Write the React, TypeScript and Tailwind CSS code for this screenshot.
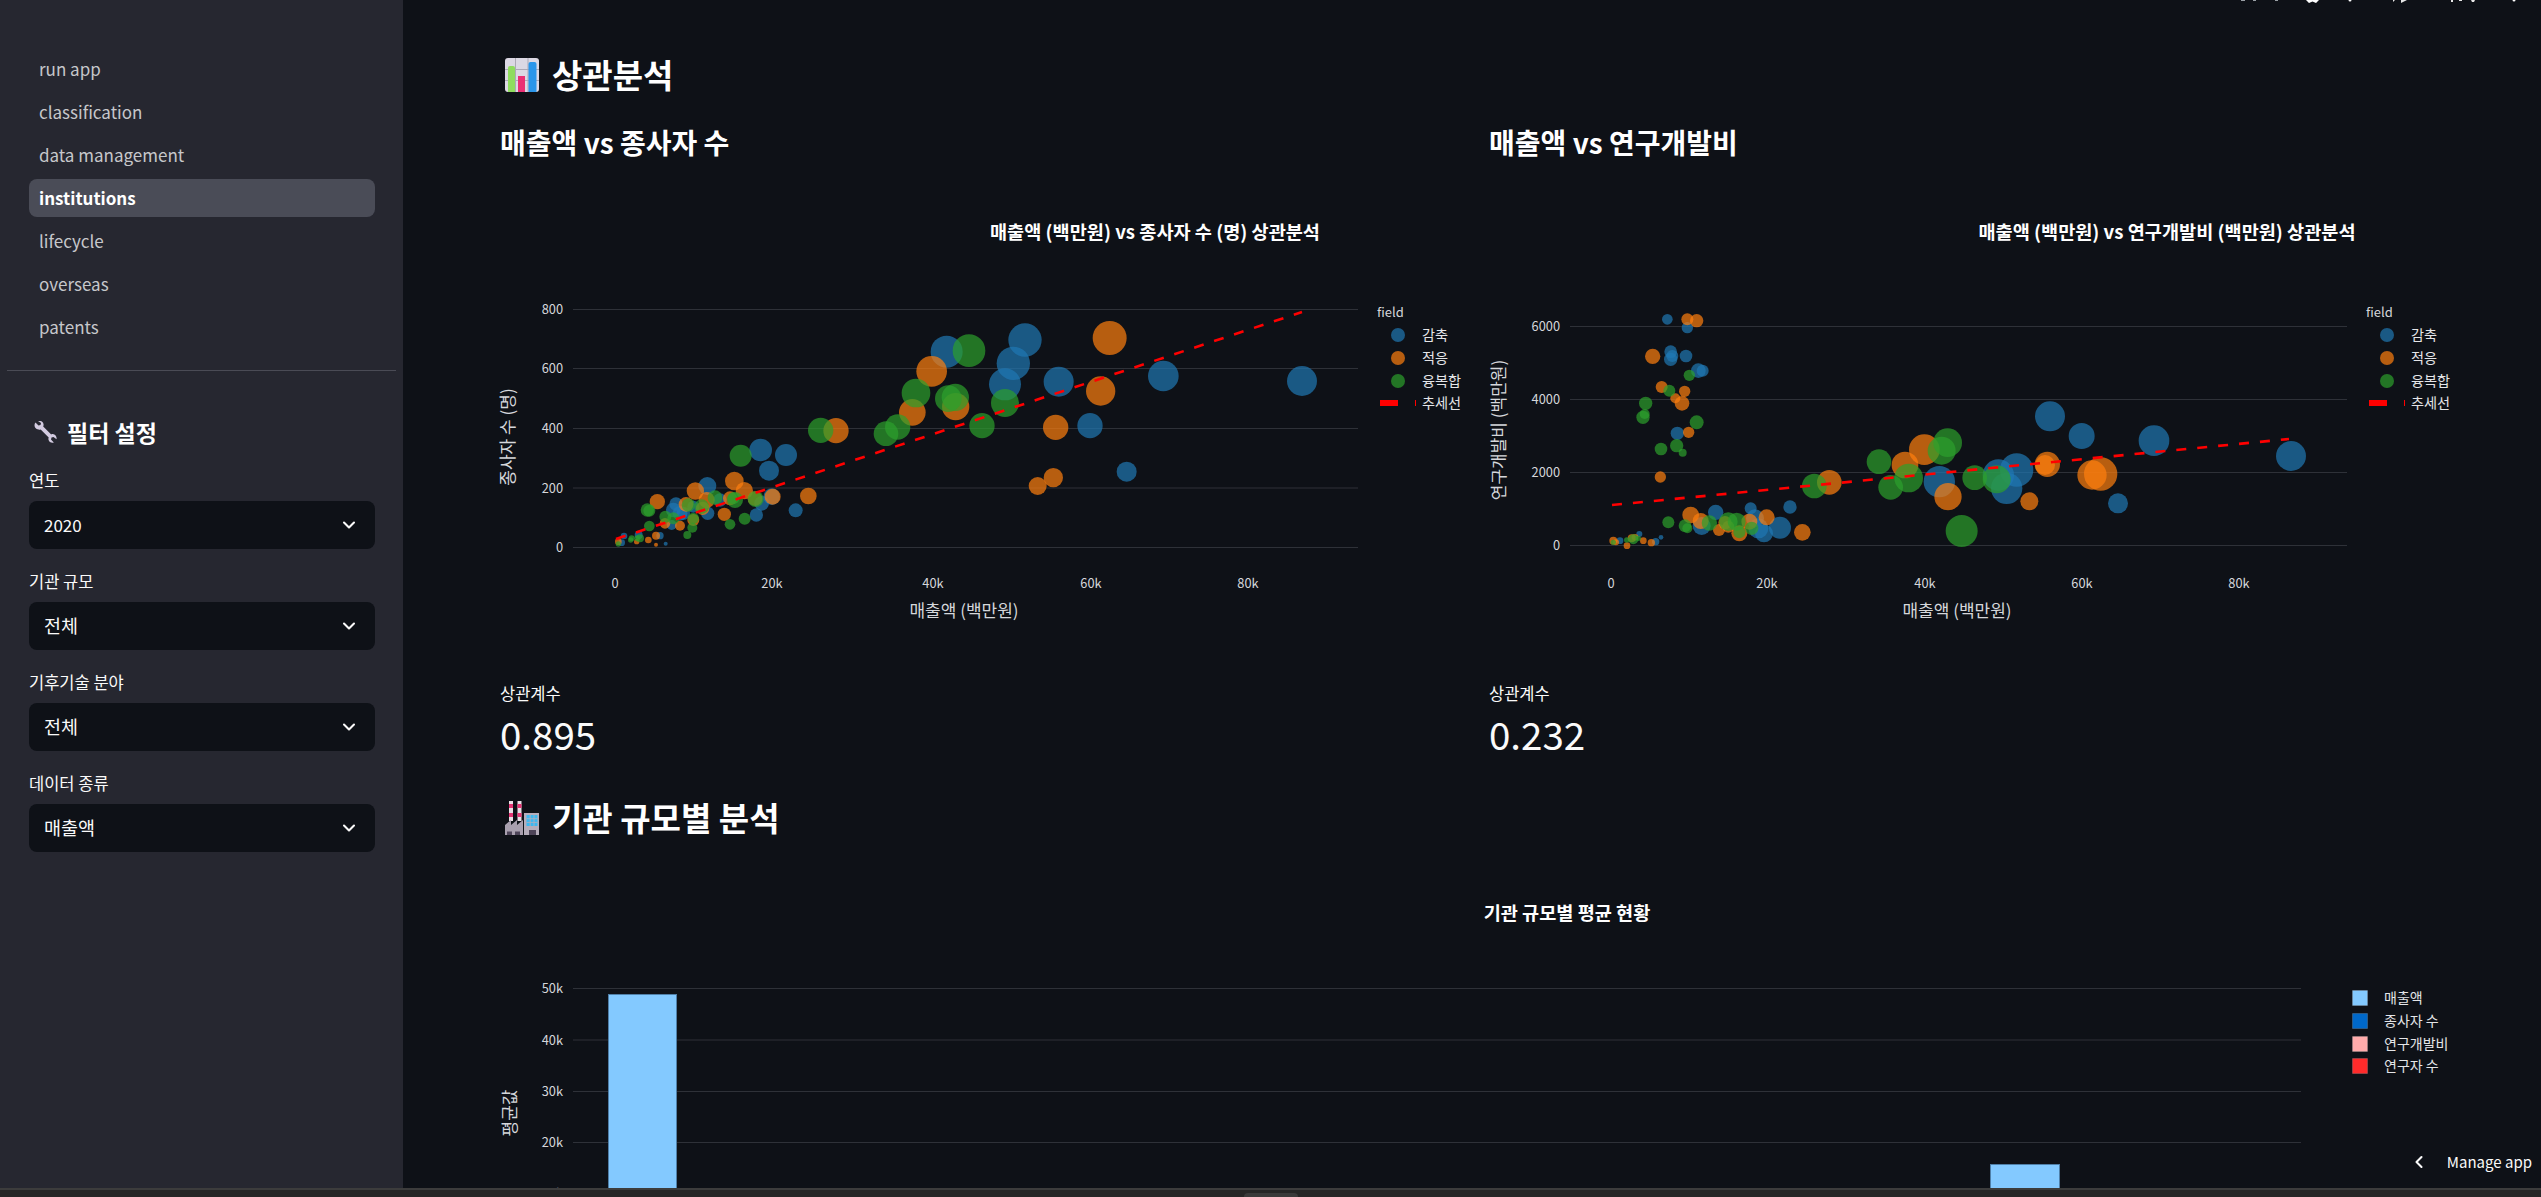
import { ChevronDown, ChevronLeft } from 'lucide-react';

type Bubble = [number, number, number];

const navItems = ['run app', 'classification', 'data management', 'institutions', 'lifecycle', 'overseas', 'patents'];

const filters = [
  { label: '연도', value: '2020' },
  { label: '기관 규모', value: '전체' },
  { label: '기후기술 분야', value: '전체' },
  { label: '데이터 종류', value: '매출액' },
];

// bubble positions were read off at 3x, so they are kept in that scale and moved to page pixels here
const at = (ox: number, oy: number, list: Bubble[]): Bubble[] =>
  list.map(([x, y, r]) => [ox + x / 3, oy + y / 3, r / 3]);

const BLUE = '#1f77b4';
const ORANGE = '#ff7f0e';
const GREEN = '#2ca02c';

const revenueStaff = {
  blue: [
    ...at(560, 280, [
      [1160, 215, 48], [602, 510, 34], [678, 525, 33], [627, 572, 30], [442, 618, 27], [348, 672, 20], [360, 700, 22],
      [340, 690, 22], [335, 735, 15], [443, 700, 20], [480, 660, 20], [589, 705, 20], [605, 670, 22], [635, 650, 25],
      [707, 691, 21], [300, 767, 11], [192, 768, 10], [236, 765, 12], [185, 788, 10], [317, 791, 6], [400, 680, 18], [370, 700, 20],
    ]),
    ...at(1000, 280, [
      [75, 180, 50], [40, 250, 50], [15, 313, 48], [176, 305, 45], [490, 288, 46], [906, 303, 45], [270, 437, 38], [380, 575, 30],
    ]),
  ],
  orange: [
    ...at(560, 280, [
      [1115, 274, 46], [1057, 397, 40], [1187, 380, 41], [828, 452, 38], [523, 603, 28], [553, 632, 26], [406, 633, 26],
      [292, 665, 23], [378, 673, 22], [440, 660, 24], [510, 655, 21], [585, 656, 22], [638, 650, 24], [745, 648, 25],
      [493, 703, 20], [428, 685, 20], [400, 720, 18], [315, 730, 16], [360, 737, 15], [288, 767, 12], [265, 780, 10],
      [230, 785, 8], [175, 785, 10], [288, 794, 6],
    ]),
    ...at(1000, 280, [[329, 174, 51], [302, 333, 44], [167, 442, 38], [160, 593, 29], [113, 618, 27]]),
  ],
  green: [
    ...at(560, 280, [
      [1068, 339, 43], [1227, 212, 49], [1165, 356, 40], [1186, 352, 41], [1013, 441, 38], [978, 461, 37], [1266, 437, 38],
      [782, 451, 38], [542, 527, 33], [465, 653, 22], [525, 660, 24], [520, 655, 18], [587, 657, 24], [268, 738, 16],
      [262, 690, 20], [268, 692, 18], [316, 710, 18], [340, 715, 18], [385, 675, 20], [425, 680, 22], [400, 715, 17],
      [397, 743, 15], [382, 765, 12], [510, 733, 16], [554, 716, 18], [212, 780, 8], [215, 775, 9], [240, 775, 12],
      [232, 775, 9], [175, 792, 8],
    ]),
    ...at(1000, 280, [[15, 369, 42]]),
  ],
};

const revenueRnd = {
  blue: [
    ...at(1480, 280, [
      [562, 118, 16], [622, 143, 17], [572, 215, 19], [572, 238, 20], [577, 228, 18], [618, 228, 19], [655, 272, 22],
      [668, 272, 18], [592, 460, 20], [665, 738, 27], [707, 697, 23], [812, 685, 18], [825, 715, 27], [835, 745, 30],
      [852, 760, 27], [900, 743, 33], [930, 681, 20], [478, 762, 9], [420, 782, 10], [527, 785, 11], [543, 772, 7], [1378, 605, 47],
    ]),
    ...at(1980, 280, [
      [210, 409, 45], [305, 468, 39], [522, 482, 46], [933, 528, 45], [110, 570, 50], [55, 585, 47], [80, 625, 47], [414, 670, 30],
    ]),
  ],
  orange: [
    ...at(1480, 280, [
      [622, 118, 18], [650, 122, 20], [518, 229, 23], [545, 321, 18], [614, 334, 17], [586, 355, 15], [606, 370, 22],
      [626, 457, 17], [541, 591, 17], [632, 705, 25], [662, 723, 24], [717, 750, 18], [735, 728, 20], [745, 740, 18],
      [778, 760, 24], [808, 725, 24], [860, 712, 24], [967, 757, 25], [1048, 607, 37], [1275, 555, 40], [1333, 509, 46],
      [1404, 650, 41], [400, 782, 12], [408, 787, 9], [441, 797, 10], [455, 775, 12], [490, 782, 10], [514, 788, 11], [465, 772, 10],
    ]),
    ...at(1980, 280, [[202, 553, 38], [195, 555, 30], [336, 585, 44], [362, 582, 50], [148, 664, 27]]),
  ],
  green: [
    ...at(1480, 280, [
      [497, 370, 20], [494, 402, 15], [489, 412, 20], [568, 332, 18], [628, 286, 17], [650, 427, 21], [590, 497, 20],
      [543, 507, 19], [608, 518, 12], [565, 727, 18], [615, 737, 19], [622, 745, 15], [688, 729, 23], [745, 725, 28],
      [770, 725, 27], [778, 757, 18], [815, 745, 20], [1003, 618, 37], [1197, 545, 37], [1232, 622, 37], [1286, 594, 43],
      [1403, 488, 43], [1385, 512, 42], [1445, 753, 48], [1484, 593, 37], [400, 787, 8], [440, 780, 8], [460, 778, 15], [475, 775, 8],
    ]),
    ...at(1980, 280, [[50, 598, 42]]),
  ],
};

const GRID = '#2e3138';
const TICK = '#d5d7db';

interface ScatterProps {
  box: string;
  title: string;
  titleX: number;
  gridLeft: number;
  gridRight: number;
  yTicks: [string, number][];
  xTicks: [string, number][];
  yTitle: string;
  yTitleX: number;
  yTitleY: number;
  xTitleX: number;
  trend: [number, number, number, number];
  legendX: number;
  data: { blue: Bubble[]; orange: Bubble[]; green: Bubble[] };
}

function Scatter(p: ScatterProps) {
  const traces: [Bubble[], string][] = [
    [p.data.blue, BLUE],
    [p.data.orange, ORANGE],
    [p.data.green, GREEN],
  ];
  const legend: [string, string, number][] = [
    ['감축', BLUE, 335],
    ['적응', ORANGE, 358],
    ['융복합', GREEN, 381],
  ];
  return (
    <svg viewBox={p.box} className="block w-full h-[450px] overflow-visible">
      <text x={p.titleX} y={239} textAnchor="middle" fontSize={18.6} fontWeight={700} fill="#ffffff">
        {p.title}
      </text>
      {p.yTicks.map(([label, y]) => (
        <g key={label}>
          <line x1={p.gridLeft} x2={p.gridRight} y1={y} y2={y} stroke={GRID} />
          <text x={p.gridLeft - 10} y={y + 4.5} textAnchor="end" fontSize={12.8} fill={TICK}>
            {label}
          </text>
        </g>
      ))}
      {p.xTicks.map(([label, x]) => (
        <text key={label} x={x} y={588} textAnchor="middle" fontSize={12.8} fill={TICK}>
          {label}
        </text>
      ))}
      <text x={p.xTitleX} y={617} textAnchor="middle" fontSize={17} fill={TICK}>
        매출액 (백만원)
      </text>
      <text
        transform={`translate(${p.yTitleX} ${p.yTitleY}) rotate(-90)`}
        textAnchor="middle"
        fontSize={17}
        fill={TICK}
      >
        {p.yTitle}
      </text>
      {traces.map(([list, color]) =>
        list.map(([x, y, r], i) => <circle key={color + i} cx={x} cy={y} r={r} fill={color} fillOpacity={0.7} />),
      )}
      <line
        x1={p.trend[0]}
        y1={p.trend[1]}
        x2={p.trend[2]}
        y2={p.trend[3]}
        stroke="#ff0000"
        strokeWidth={2.6}
        strokeDasharray="10 11"
      />
      <text x={p.legendX} y={317} fontSize={13} fill={TICK}>
        field
      </text>
      {legend.map(([label, color, y]) => (
        <g key={label}>
          <circle cx={p.legendX + 21} cy={y} r={7} fill={color} fillOpacity={0.7} />
          <text x={p.legendX + 45} y={y + 5} fontSize={14.2} fill="#e4e5e8">
            {label}
          </text>
        </g>
      ))}
      <rect x={p.legendX + 3} y={400} width={18} height={6} fill="#ff0000" />
      <rect x={p.legendX + 38} y={400} width={1} height={6} fill="#ff0000" />
      <text x={p.legendX + 45} y={408} fontSize={14.2} fill="#e4e5e8">
        추세선
      </text>
    </svg>
  );
}

function ScaleChart() {
  const rows: [string, number][] = [
    ['50k', 987.5],
    ['40k', 1039],
    ['30k', 1090.5],
    ['20k', 1141.5],
    ['10k', 1192.5],
  ];
  const legend: [string, string, number][] = [
    ['매출액', '#83c9ff', 997],
    ['종사자 수', '#0068c9', 1020],
    ['연구개발비', '#ffabab', 1043],
    ['연구자 수', '#ff2b2b', 1065],
  ];
  return (
    <svg viewBox="500 880 1962 450" className="block w-full h-[450px] overflow-visible">
      <text x={1567} y={919} textAnchor="middle" fontSize={18.6} fontWeight={700} fill="#ffffff">
        기관 규모별 평균 현황
      </text>
      {rows.map(([label, y]) => (
        <g key={label}>
          <line x1={573} x2={2301} y1={y} y2={y} stroke={GRID} />
          <text x={563} y={y + 4.5} textAnchor="end" fontSize={12.8} fill={TICK}>
            {label}
          </text>
        </g>
      ))}
      <text transform="translate(516 1112) rotate(-90)" textAnchor="middle" fontSize={17} fill={TICK}>
        평균값
      </text>
      <rect x={608.5} y={993.5} width={68} height={300} fill="#83c9ff" stroke="#4f7fa8" />
      <rect x={1990.5} y={1163.5} width={69} height={100} fill="#83c9ff" stroke="#4f7fa8" />
      {legend.map(([label, color, y]) => (
        <g key={label}>
          <rect x={2352.5} y={y - 7.5} width={15} height={15} fill={color} stroke="#ffffff" strokeOpacity={0.15} />
          <text x={2384} y={y + 5} fontSize={14} fill="#e4e5e8">
            {label}
          </text>
        </g>
      ))}
    </svg>
  );
}

function ChartEmoji() {
  return (
    <svg viewBox="0 0 34 34" className="w-[34px] h-[34px] shrink-0 ml-[5px]">
      <rect width="34" height="34" rx="3" fill="#dcd8e4" />
      <path d="M0 11.5H34M0 22.5H34M10.5 0V34M23 0V34" stroke="#aca8b6" strokeWidth="1" />
      <path d="M3 10a2 2 0 0 1 2-2h3a2 2 0 0 1 2 2v24H3z" fill="#8fdc5e" />
      <rect x="13" y="18" width="7" height="16" fill="#ea2f74" />
      <path d="M23.5 6a2 2 0 0 1 2-2h4a2 2 0 0 1 2 2v28h-8z" fill="#2b96ea" />
    </svg>
  );
}

function FactoryEmoji() {
  return (
    <svg viewBox="0 0 34 34" className="w-[34px] h-[34px] shrink-0 ml-[5px]">
      <path d="M4 0h4v20H4zM12.500 0h4v20h-4z" fill="#e9dfe6" />
      <path d="M4 3h4v4H4zM12.500 3h4v4h-4zM4 12h4v4H4zM12.500 12h4v4h-4z" fill="#e33472" />
      <path d="M0 34V24l6-5v5l6-5v5l6-5v15z" fill="#a89fae" />
      <rect x="19" y="12" width="15" height="22" fill="#b5adba" />
      <rect x="21.500" y="14" width="11" height="11" fill="#3cb8f0" />
      <path d="M25.200 14v11M29 14v11M21.500 17.700h11M21.500 21.400h11" stroke="#b5adba" strokeWidth="0.8" />
      <path d="M2 30.500h5V34H2zM10 30.500h5V34h-5zM24 29h7v5h-7z" fill="#4d4458" />
    </svg>
  );
}

function WrenchEmoji() {
  return (
    <svg viewBox="0 0 24 22" className="w-[24px] h-[22px] shrink-0 ml-[4px]">
      <path
        d="M2.500 1.500l3 3 2-.5.5-2-3-2C7.500-.5 10 .500 10.500 3c.2 1 0 1.800-.3 2.400l8 8c.7-.3 1.500-.4 2.300-.2 2.300.5 3.500 3 3 5l-3-2.200-2 .5-.5 2 2.800 3c-2.300.7-4.800-.5-5.300-2.800-.2-.8-.1-1.600.2-2.300l-8-8c-.7.3-1.500.4-2.300.2C1.500 8 .500 4 2.500 1.500z"
        fill="#d3cbe0"
      />
    </svg>
  );
}

function Sidebar() {
  return (
    <aside className="w-[403px] shrink-0 bg-[#262730] flex flex-col">
      <nav className="flex flex-col gap-[5px] pt-[50px] pl-[29px] pr-[28px] text-[17px]">
        {navItems.map((item) =>
          item === 'institutions' ? (
            <div key={item} className="h-[38px] px-[10px] flex items-center rounded-lg bg-[#4a4c57] font-semibold text-white">
              {item}
            </div>
          ) : (
            <div key={item} className="h-[38px] px-[10px] flex items-center text-[#c6c7cb]">
              {item}
            </div>
          ),
        )}
      </nav>
      <div className="mt-[24px] mx-[7px] h-px bg-[#4a4b55]" />
      <div className="pl-[29px] pr-[28px]">
        <div className="mt-[43px] h-[36px] flex items-center gap-[10px]">
          <WrenchEmoji />
          <h2 className="text-[23px] font-semibold text-white">필터 설정</h2>
        </div>
        <div className="mt-[20px] flex flex-col gap-[22px]">
          {filters.map((f) => (
            <div key={f.label}>
              <div className="h-[20px] flex items-center text-[16.5px] text-[#fafafa]">{f.label}</div>
              <div className="mt-[11px] h-[48px] pl-[15px] pr-[16px] flex items-center justify-between rounded-lg bg-[#0e1117] text-[#fafafa]">
                <span className={f.value === '2020' ? 'text-[17px]' : 'text-[18.5px]'}>{f.value}</span>
                <ChevronDown size={20} strokeWidth={2.5} />
              </div>
            </div>
          ))}
        </div>
      </div>
    </aside>
  );
}

function Metric({ value }: { value: string }) {
  return (
    <div className="mt-[52px]">
      <div className="h-[22px] flex items-center text-[16.5px] text-[#fafafa]">상관계수</div>
      <div className="mt-[5px] h-[50px] flex items-center text-[38.5px] text-[#fafafa]">{value}</div>
    </div>
  );
}

export default function App() {
  return (
    <div className="relative h-screen w-full overflow-hidden flex flex-col bg-[#0e1117] font-['Noto_Sans_CJK_KR',sans-serif]">
      <div className="flex flex-1 min-h-0">
        <Sidebar />
        <main className="flex-1 min-w-0 overflow-hidden pl-[97px] pr-[79px] pt-[55px]">
          <div className="h-[40px] flex items-center gap-[13px]">
            <ChartEmoji />
            <h2 className="text-[33px] font-semibold text-white">상관분석</h2>
          </div>
          <div className="mt-[27px] grid grid-cols-2 gap-4">
            <div>
              <h3 className="h-[40px] flex items-center text-[28px] font-semibold text-white">매출액 vs 종사자 수</h3>
              <div className="mt-[18px]">
                <Scatter
                  box="500 180 973 450"
                  title="매출액 (백만원) vs 종사자 수 (명) 상관분석"
                  titleX={1155}
                  gridLeft={573}
                  gridRight={1358}
                  yTicks={[['800', 309.5], ['600', 368.5], ['400', 428.5], ['200', 488], ['0', 547.5]]}
                  xTicks={[['0', 615], ['20k', 772], ['40k', 933], ['60k', 1091], ['80k', 1248]]}
                  yTitle="종사자 수 (명)"
                  yTitleX={514}
                  yTitleY={437}
                  xTitleX={964}
                  trend={[616, 539, 1302, 312]}
                  legendX={1377}
                  data={revenueStaff}
                />
              </div>
              <Metric value="0.895" />
            </div>
            <div>
              <h3 className="h-[40px] flex items-center text-[28px] font-semibold text-white">매출액 vs 연구개발비</h3>
              <div className="mt-[18px]">
                <Scatter
                  box="1489 180 973 450"
                  title="매출액 (백만원) vs 연구개발비 (백만원) 상관분석"
                  titleX={2167}
                  gridLeft={1570}
                  gridRight={2347}
                  yTicks={[['6000', 326.5], ['4000', 399.5], ['2000', 472.5], ['0', 545.5]]}
                  xTicks={[['0', 1611], ['20k', 1767], ['40k', 1925], ['60k', 2082], ['80k', 2239]]}
                  yTitle="연구개발비 (백만원)"
                  yTitleX={1505}
                  yTitleY={430}
                  xTitleX={1957}
                  trend={[1612, 505, 2289, 439]}
                  legendX={2366}
                  data={revenueRnd}
                />
              </div>
              <Metric value="0.232" />
            </div>
          </div>
          <div className="mt-[39px] h-[40px] flex items-center gap-[13px]">
            <FactoryEmoji />
            <h2 className="text-[33px] font-semibold text-white">기관 규모별 분석</h2>
          </div>
          <div className="mt-[43px]">
            <ScaleChart />
          </div>
        </main>
      </div>
      <div className="h-[9px] shrink-0 border-t-2 border-[#3c3c3c] bg-[#262626] flex justify-center">
        <div className="mt-[3px] w-[54px] h-[4px] rounded-t bg-[#3a3a3a]" />
      </div>
      {/* bits of the scrolled-away toolbar and the floating manage button */}
      <svg viewBox="0 0 300 4" className="absolute top-0 right-0 w-[300px] h-[4px]">
        <path d="M0 0h4v1H0zM12 0h3v1h-3zM34 0h3v1h-3z" fill="#9aa0a6" />
        <path d="M65 0h13l-3 3-3.500-1.500L68 3z" fill="#ffffff" />
        <circle cx="109" cy="0" r="1.500" fill="#ffffff" />
        <path d="M152 0h2l-2 2zM160 0h6l-6 3zM210 0h2v2h-2zM218 0h3v1h-3zM230 0h4l-1 2h-2z" fill="#e8e8e8" />
        <circle cx="273" cy="0" r="1.500" fill="#ffffff" />
      </svg>
      <div className="absolute right-[9px] top-[1151px] h-[22px] flex items-center gap-[18px] text-[15px] text-[#fafafa]">
        <ChevronLeft size={20} strokeWidth={2.5} />
        <span>Manage app</span>
      </div>
    </div>
  );
}
